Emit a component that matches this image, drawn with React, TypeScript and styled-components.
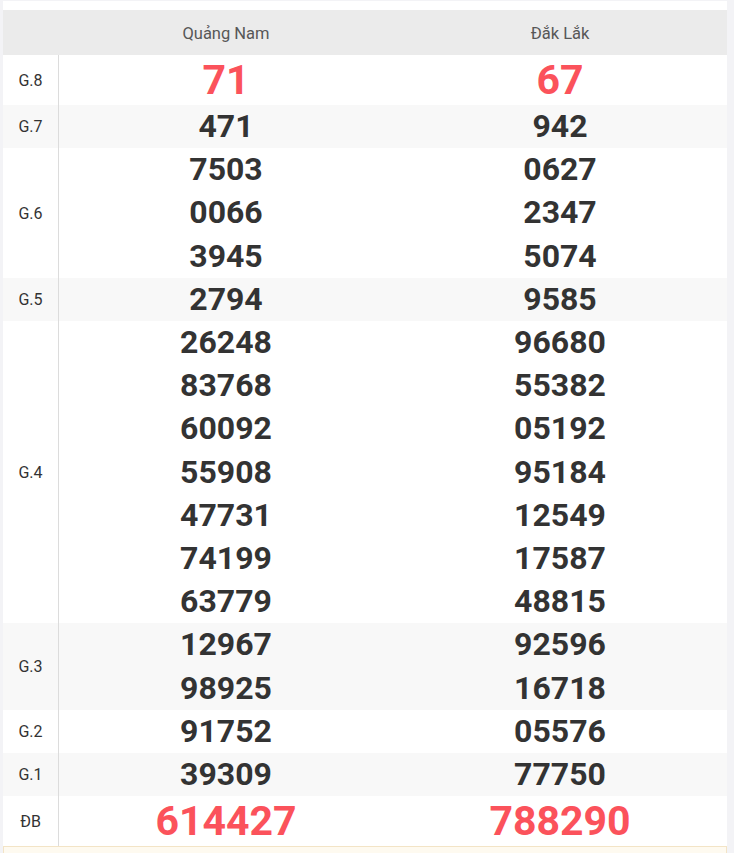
import React from "react"
import styled, { createGlobalStyle } from "styled-components"

const GlobalStyle = createGlobalStyle`
  html, body {
    margin: 0;
    padding: 0;
    background: #f3f3f6;
  }
  body {
    font-family: Roboto, "Liberation Sans", Arial, sans-serif;
  }
`

const Page = styled.div`
  padding: 1px 7px 0 3px;
  height: 852px;
  overflow: hidden;
`

const Board = styled.div`
  background: #ffffff;
  padding-top: 9px;
`

const HeaderRow = styled.div`
  display: grid;
  grid-template-columns: 56px 1fr 1fr;
  height: 45px;
  background: #ebebeb;
`

const HeaderCell = styled.div`
  display: flex;
  align-items: center;
  justify-content: center;
  padding-top: 1px;
  font-size: 16.5px;
  color: #575757;
`

const PrizeRow = styled.div<{ $shaded: boolean }>`
  display: grid;
  grid-template-columns: 56px 1fr 1fr;
  background: ${(p) => (p.$shaded ? "#f8f8f8" : "#ffffff")};
`

const Label = styled.div`
  display: flex;
  align-items: center;
  justify-content: center;
  border-right: 1px solid #dcdcdc;
  font-size: 16px;
  color: #333333;
`

const NumberCell = styled.div`
  display: flex;
  flex-direction: column;
  align-items: center;
`

const Num = styled.div<{ $big: boolean }>`
  font-weight: 700;
  font-size: ${(p) => (p.$big ? "41px" : "32px")};
  line-height: ${(p) => (p.$big ? "50px" : "43.2px")};
  color: ${(p) => (p.$big ? "#fb525b" : "#333333")};
`

const Note = styled.div`
  height: 20px;
  background: #fefaf0;
  border: 1px solid #f3e4c6;
`

type Prize = { label: string; big?: boolean; left: string[]; right: string[] }

const prizes: Prize[] = [
  { label: "G.8", big: true, left: ["71"], right: ["67"] },
  { label: "G.7", left: ["471"], right: ["942"] },
  { label: "G.6", left: ["7503", "0066", "3945"], right: ["0627", "2347", "5074"] },
  { label: "G.5", left: ["2794"], right: ["9585"] },
  {
    label: "G.4",
    left: ["26248", "83768", "60092", "55908", "47731", "74199", "63779"],
    right: ["96680", "55382", "05192", "95184", "12549", "17587", "48815"],
  },
  { label: "G.3", left: ["12967", "98925"], right: ["92596", "16718"] },
  { label: "G.2", left: ["91752"], right: ["05576"] },
  { label: "G.1", left: ["39309"], right: ["77750"] },
  { label: "ĐB", big: true, left: ["614427"], right: ["788290"] },
]

const App = () => {
  return (
    <Page>
      <GlobalStyle />
      <Board>
        <HeaderRow>
          <HeaderCell />
          <HeaderCell>Quảng Nam</HeaderCell>
          <HeaderCell>Đắk Lắk</HeaderCell>
        </HeaderRow>
        {prizes.map((p, i) => (
          <PrizeRow key={p.label} $shaded={i % 2 === 1}>
            <Label>{p.label}</Label>
            <NumberCell>
              {p.left.map((n, j) => (
                <Num key={j} $big={!!p.big}>
                  {n}
                </Num>
              ))}
            </NumberCell>
            <NumberCell>
              {p.right.map((n, j) => (
                <Num key={j} $big={!!p.big}>
                  {n}
                </Num>
              ))}
            </NumberCell>
          </PrizeRow>
        ))}
        <Note />
      </Board>
    </Page>
  )
}

export default App
